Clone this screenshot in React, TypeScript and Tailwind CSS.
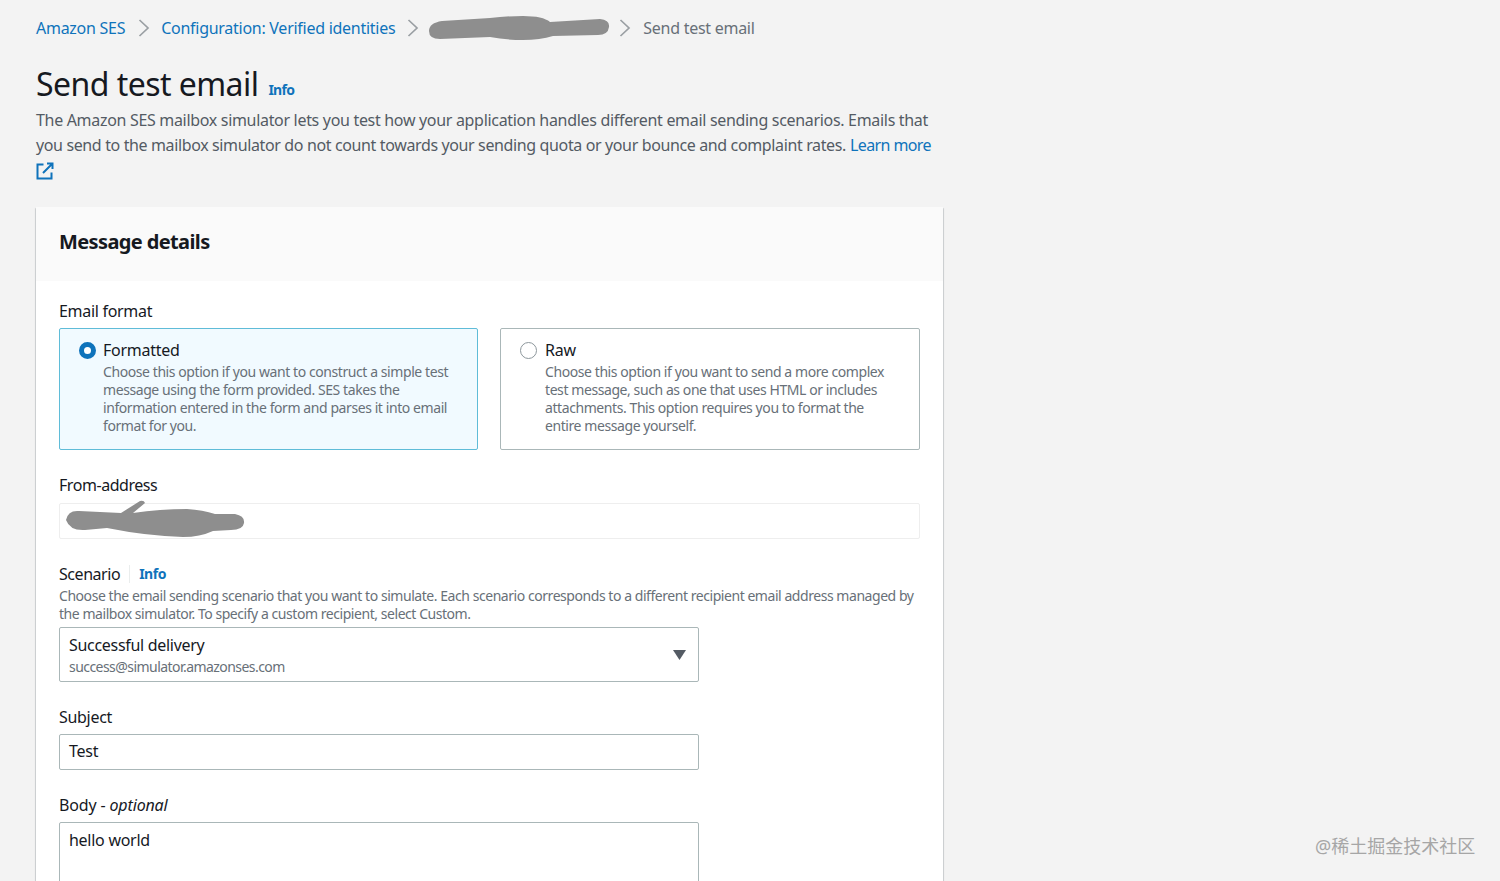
import React from "react";

const font = { fontFamily: '"Noto Sans", "Noto Sans CJK SC", sans-serif' };

function Chevron() {
  return (
    <svg width="12" height="20" viewBox="0 0 12 20" fill="none" className="shrink-0">
      <path d="M1.5 2 L10 10 L1.5 18" stroke="#9a9fa3" strokeWidth="1.7" />
    </svg>
  );
}

function Field({ label, children, className, labelClass }: { label: React.ReactNode; children: React.ReactNode; className?: string; labelClass?: string }) {
  return (
    <div className={className}>
      <div className={`text-[16px] leading-[18px] text-[#16191f] ${labelClass ?? "tracking-[-0.3px]"}`}>{label}</div>
      {children}
    </div>
  );
}

function Tile({ selected, title, text }: { selected?: boolean; title: string; text: string }) {
  return (
    <div
      className={`h-[122px] rounded-[2px] border pl-[19px] pr-[20px] pt-[12px] flex ${
        selected ? "w-[419px] gap-[7px] border-[#5fbcd8] bg-[#f1faff]" : "flex-1 gap-[8px] border-[#aab7b8] bg-white"
      }`}
    >
      <div className="shrink-0">
        {selected ? (
          <div className="w-[17px] h-[17px] mt-[1px] rounded-full border-[5px] border-[#0f73bb] bg-white" />
        ) : (
          <div className="w-[17px] h-[17px] mt-[1px] rounded-full border border-[#8d979c] bg-white" />
        )}
      </div>
      <div className="-mt-[1px]">
        <div className="text-[16px] leading-[20px] tracking-[-0.25px] text-[#16191f]">{title}</div>
        <div className="mt-[3px] text-[14px] leading-[18px] tracking-[-0.42px] text-[#687078]">{text}</div>
      </div>
    </div>
  );
}

export default function App() {
  return (
    <div style={font} className="relative w-[1500px] h-[881px] overflow-hidden bg-[#f3f3f3]">
      <div className="w-[907px] ml-[36px]">
        <nav className="h-[20px] mt-[18px] flex items-center text-[16px] leading-[20px] tracking-[-0.27px]">
          <span className="text-[#0f73bb]">Amazon SES</span>
          <span className="ml-[13px] mr-[11px]"><Chevron /></span>
          <span className="text-[#0f73bb]">Configuration: Verified identities</span>
          <span className="ml-[12px] mr-[9px]"><Chevron /></span>
          <svg width="182" height="26" viewBox="0 0 182 26" className="shrink-0">
            <path
              d="M1 16 Q1 8 14 6 L62 3 Q78 1 95 1 Q115 1 122 7 L172 4 Q182 5 181 12 Q180 20 170 20 L125 21 Q112 25 95 25 Q78 25 62 22 L12 24 Q1 24 1 16Z"
              fill="#8e8e8e"
            />
          </svg>
          <span className="ml-[9px] mr-[12px]"><Chevron /></span>
          <span className="text-[#687078]">Send test email</span>
        </nav>

        <div className="mt-[25px] flex items-baseline gap-[10px]">
          <h1 className="text-[32px] leading-[42px] font-normal tracking-[-0.55px] text-[#16191f]">Send test email</h1>
          <span className="text-[14px] font-bold tracking-[-0.7px] -translate-y-[1px] text-[#0f73bb]">Info</span>
        </div>
        <div className="mt-[3px] text-[16px] leading-[25px] text-[#545b64]">
          <div className="tracking-[-0.314px] whitespace-nowrap">
            The Amazon SES mailbox simulator lets you test how your application handles different email sending scenarios. Emails that
          </div>
          <div className="flex whitespace-nowrap">
            <span className="tracking-[-0.37px]">you send to the mailbox simulator do not count towards your sending quota or your bounce and complaint rates.</span>
            <span className="ml-[4px] text-[#0f73bb] tracking-[-0.6px]">Learn more</span>
          </div>
          <div className="h-[25px] flex items-center">
            <svg width="18" height="18" viewBox="0 0 18 18" fill="none">
              <path d="M7.5 2.5 H1.5 V16.5 H15.5 V10.5" stroke="#0f73bb" strokeWidth="2" />
              <path d="M11 1.5 H16.5 V7 M16.5 1.5 L7 11" stroke="#0f73bb" strokeWidth="2" />
            </svg>
          </div>
        </div>

        <section className="mt-[24px] bg-white rounded-[1px] shadow-[0_1px_1px_0_rgba(0,28,36,0.3),1px_1px_1px_0_rgba(0,28,36,0.15),-1px_1px_1px_0_rgba(0,28,36,0.15)]">
          <header className="h-[74px] bg-[#fafafa] px-[23px] pb-[4px] flex items-center">
            <h2 className="text-[20px] leading-[26px] font-bold tracking-[-0.62px] text-[#16191f]">Message details</h2>
          </header>
          <div className="pl-[23px] pr-[23px] pt-[21px] pb-[40px]">
            <Field label="Email format">
              <div className="mt-[8px] flex gap-[22px]">
                <Tile
                  selected
                  title="Formatted"
                  text="Choose this option if you want to construct a simple test message using the form provided. SES takes the information entered in the form and parses it into email format for you."
                />
                <Tile
                  title="Raw"
                  text="Choose this option if you want to send a more complex test message, such as one that uses HTML or includes attachments. This option requires you to format the entire message yourself."
                />
              </div>
            </Field>

            <Field label="From-address" labelClass="tracking-[-0.45px]" className="mt-[26px]">
              <div className="relative mt-[9px] h-[36px] border border-[#eeeeee] rounded-[2px]">
                <svg width="182" height="38" viewBox="0 0 182 38" className="absolute left-[5px] top-[-4px]">
                  <path
                    d="M1 20 Q3 10 14 11 L56 13 L75 1 Q79 0 80 3 L68 13 Q95 9 122 9 Q138 10 150 14 L170 14 Q180 16 179 23 Q178 30 166 30 L148 31 Q135 37 118 37 Q82 36 42 28 L20 30 Q5 31 1 20Z"
                    fill="#8e8e8e"
                  />
                </svg>
              </div>
            </Field>

            <div className="mt-[26px]">
              <div className="flex items-center text-[16px] leading-[18px] tracking-[-0.45px] text-[#16191f]">
                <span className="pr-[9px] border-r border-[#eaeded]">Scenario</span>
                <span className="ml-[9px] text-[14px] font-bold tracking-[-0.5px] text-[#0f73bb]">Info</span>
              </div>
              <p className="mt-[4px] text-[14px] leading-[18px] tracking-[-0.45px] text-[#687078]">
                Choose the email sending scenario that you want to simulate. Each scenario corresponds to a different recipient email address managed by the mailbox simulator. To specify a custom recipient, select Custom.
              </p>
            </div>

            <div className="mt-[4px] w-[640px] h-[55px] border border-[#aab7b8] rounded-[2px] pl-[9px] pr-[12px] flex items-center justify-between">
              <div className="pt-[2px]">
                <div className="text-[16px] leading-[20px] tracking-[-0.3px] text-[#16191f]">Successful delivery</div>
                <div className="mt-[3px] text-[14px] leading-[18px] tracking-[-0.55px] text-[#687078]">success@simulator.amazonses.com</div>
              </div>
              <svg width="13" height="10" viewBox="0 0 13 10">
                <path d="M0 0 H13 L6.5 10Z" fill="#545b64" />
              </svg>
            </div>

            <Field label="Subject" className="mt-[26px] w-[640px]">
              <div className="mt-[8px] h-[36px] border border-[#aab7b8] rounded-[2px] px-[9px] pb-[2px] flex items-center text-[16px] tracking-[-0.27px] text-[#16191f]">
                Test
              </div>
            </Field>

            <Field label={<>Body - <em>optional</em></>} labelClass="tracking-[-0.15px]" className="mt-[26px] w-[640px]">
              <div className="mt-[8px] h-[120px] border border-[#aab7b8] rounded-[2px] px-[9px] pt-[6px] text-[16px] leading-[22px] tracking-[-0.27px] text-[#16191f]">
                hello world
              </div>
            </Field>
          </div>
        </section>
      </div>

      <div className="absolute left-[1315px] top-[835px] text-[18px] leading-[22px] text-[#a6a6a6] whitespace-nowrap">
        @稀土掘金技术社区
      </div>
    </div>
  );
}
